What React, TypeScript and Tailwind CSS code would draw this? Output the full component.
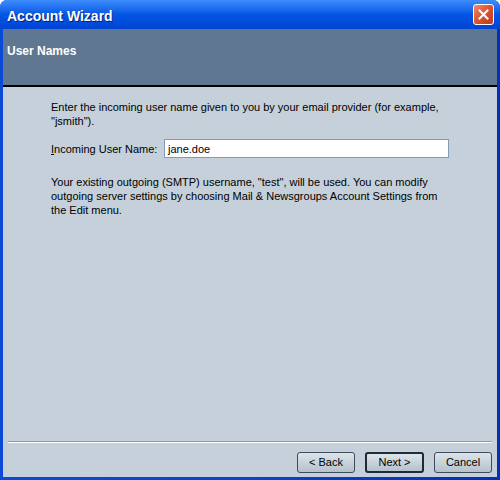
import React from "react";

export default function App() {
  const font = { fontFamily: "'Liberation Sans', Arial, sans-serif" };
  return (
    <div className="w-[500px] h-[480px] bg-white overflow-hidden" style={font}>
      <div className="w-[500px] h-[480px] flex flex-col rounded-t-[7px] bg-[#0a49d8] overflow-hidden">
        {/* title bar */}
        <div className="h-[29px] flex items-center justify-between pl-[7px] pr-[6px] bg-gradient-to-b from-[#3d8dfd] via-[#0356e4] to-[#0044d4] shrink-0">
          <span className="text-white font-bold text-[14px] pt-[3px] [text-shadow:1px_1px_0_#0a1e6e]">Account Wizard</span>
          <div className="w-[21px] h-[21px] rounded-[3px] border border-white bg-gradient-to-br from-[#f08a6a] via-[#e0502a] to-[#c03a18] flex items-center justify-center">
            <svg width="11" height="11" viewBox="0 0 11 11">
              <path d="M1.5 1.5 L9.5 9.5 M9.5 1.5 L1.5 9.5" stroke="white" strokeWidth="2" strokeLinecap="square" />
            </svg>
          </div>
        </div>
        {/* content frame */}
        <div className="flex-1 flex flex-col px-[3px] pb-[3px] bg-gradient-to-r from-[#0a4ad6] via-[#0844cc] to-[#0031b8]">
          <div className="flex-1 flex flex-col bg-[#c5d0da]">
            {/* header */}
            <div className="h-[58px] bg-[#5f7791] border-b-[2px] border-black pl-[4px] pt-[9px] shrink-0">
              <span className="text-white font-bold text-[12px] leading-[16px]">User Names</span>
            </div>
            {/* body */}
            <div className="flex-1 flex flex-col pl-[48px] pr-[20px] pt-[13px] text-[11px] leading-[14px] text-black whitespace-nowrap">
              <p>
                Enter the incoming user name given to you by your email provider (for example,
                <br />
                "jsmith").
              </p>
              <div className="flex items-center mt-[11px]">
                <label className="w-[113px]">
                  <span className="underline">I</span>ncoming User Name:
                </label>
                <div className="w-[285px] h-[19px] bg-white border border-[#7f9db9] flex items-center pl-[3px]">
                  jane.doe
                </div>
              </div>
              <p className="mt-[17px]">
                Your existing outgoing (SMTP) username, "test", will be used. You can modify
                <br />
                outgoing server settings by choosing Mail &amp; Newsgroups Account Settings from
                <br />
                the Edit menu.
              </p>
            </div>
            {/* footer */}
            <div className="shrink-0 px-[5px]">
              <div className="h-[2px] border-t border-[#8a98a8] border-b border-b-white" />
            </div>
            <div className="shrink-0 flex justify-end gap-[10px] pr-[5px] pt-[9px] pb-[4px] text-[11px]">
              <button className="w-[58px] h-[21px] rounded-[3px] border border-[#3c4c5c] bg-gradient-to-b from-[#dde4ea] to-[#b5c1cc] text-black">
                &lt; Back
              </button>
              <button className="w-[59px] h-[21px] rounded-[3px] border-2 border-[#1e2a36] bg-gradient-to-b from-[#dde4ea] to-[#b5c1cc] text-black">
                Next &gt;
              </button>
              <button className="w-[58px] h-[21px] rounded-[3px] border border-[#3c4c5c] bg-gradient-to-b from-[#dde4ea] to-[#b5c1cc] text-black">
                Cancel
              </button>
            </div>
          </div>
        </div>
      </div>
    </div>
  );
}
